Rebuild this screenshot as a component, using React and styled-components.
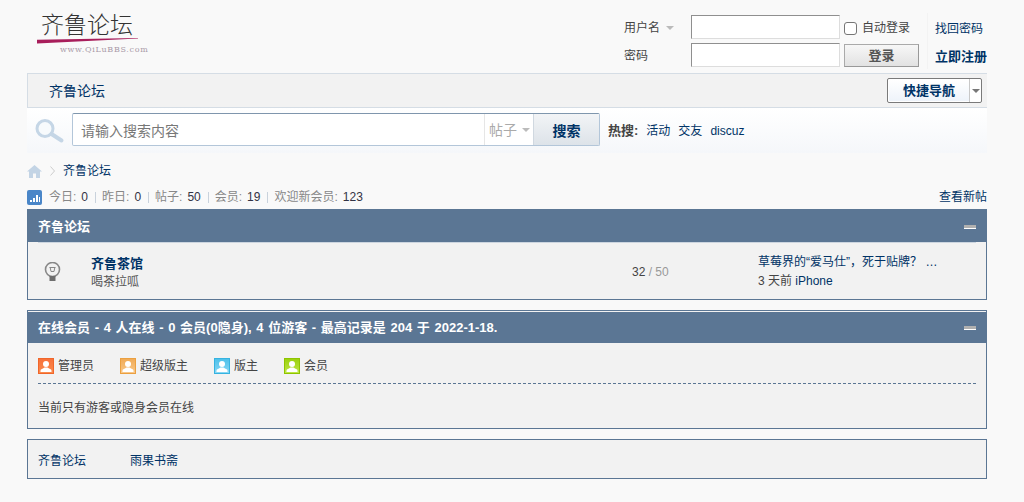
import React from 'react';
import styled, { createGlobalStyle } from 'styled-components';

const cjk = '"Liberation Sans", "Noto Sans CJK SC", sans-serif';
const link = '#003366';
const line = '#5b7694';

const Global = createGlobalStyle`
  html, body { margin: 0; padding: 0; background: #f9f9f9; }
  body { font: 12px/18px ${cjk}; color: #444; }
  a { color: ${link}; text-decoration: none; }
`;

const Page = styled.div`
  width: 960px;
  margin: 0 auto 0 27px;
  height: 502px;
  overflow: hidden;
`;

const Header = styled.header`
  height: 73px;
  display: flex;
  justify-content: space-between;
`;

const Logo = styled.div`
  width: 130px;
  margin-left: 10px;
  padding-top: 9px;
  display: flex;
  flex-direction: column;
`;

const LogoName = styled.div`
  margin-left: 4px;
  font: 300 23px/28px "Noto Sans CJK SC", sans-serif;
  color: #333;
`;

const Swoosh = styled.svg`
  display: block;
  width: 102px;
  height: 6px;
  margin-top: 1px;
`;

const LogoUrl = styled.div`
  margin-left: 23px;
  margin-top: 1px;
  font: 8px/10px "DejaVu Serif", serif;
  letter-spacing: 0.7px;
  color: #a99aa8;
  white-space: nowrap;
`;

const LoginForm = styled.form`
  display: grid;
  grid-template-columns: 67px 153px 83px 60px;
  grid-auto-rows: 28px;
  width: 363px;
  margin-top: 13px;
  align-items: center;
  color: #444;
`;

const FormLabel = styled.label`
  display: flex;
  align-items: center;
  gap: 6px;
  padding-top: 2px;
  color: #444;
`;

const Caret = styled.i`
  display: inline-block;
  width: 0;
  height: 0;
  border: 4px solid transparent;
  border-top: 4px solid ${p => p.$color || '#bbb'};
  border-bottom: 0;
`;

const FormInput = styled.input`
  box-sizing: border-box;
  width: 149px;
  height: 24px;
  padding: 0 4px;
  background: #fff;
  border: 1px solid #ddd;
  border-top-color: #8f8f8f;
  border-left-color: #8f8f8f;
  outline: 0;
`;

const AutoLogin = styled.label`
  display: flex;
  align-items: center;
  gap: 5px;
  padding-top: 2px;
`;

const Box = styled.input`
  appearance: none;
  box-sizing: border-box;
  width: 13px;
  height: 13px;
  margin: 0;
  background: #fff;
  border: 1px solid #767676;
  border-radius: 3px;
`;

const LoginButton = styled.button`
  box-sizing: border-box;
  width: 75px;
  height: 23px;
  padding: 0 0 1px;
  font: bold 13px ${cjk};
  color: #555;
  background: linear-gradient(#f7f7f7, #e2e2e2);
  border: 1px solid #999;
  border-color: #aaa #999 #999 #aaa;
`;

const SideLink = styled.a`
  box-sizing: border-box;
  height: 28px;
  padding: 7px 0 0 7px;
  border-left: 1px solid #f3f3f3;
  font: ${p => (p.$strong ? 'bold 13px/18px' : '12px/18px')} ${cjk};
  white-space: nowrap;
`;

const NavBar = styled.nav`
  box-sizing: border-box;
  height: 35px;
  padding: 0 5px 0 21px;
  display: flex;
  align-items: center;
  justify-content: space-between;
  background: #f2f2f2;
  border: 1px solid #d5dde5;
  border-width: 1px 0 1px 1px;
  font-size: 14px;
`;

const QuickNav = styled.div`
  box-sizing: border-box;
  width: 95px;
  height: 25px;
  display: flex;
  background: #fff;
  border: 1px solid #7a7a7a;
  border-radius: 2px;
`;

const QuickLabel = styled.a`
  flex: 1;
  margin: 1px 0 1px 1px;
  font: bold 13px/22px ${cjk};
  text-align: center;
  background: linear-gradient(#fff, #eef3fa);
  color: ${link};
`;

const QuickArrow = styled.span`
  width: 11px;
  display: flex;
  align-items: center;
  justify-content: center;
  border-left: 1px solid #c8c8c8;
`;

const SearchBar = styled.div`
  box-sizing: border-box;
  height: 45px;
  display: flex;
  align-items: center;
  padding: 0 0 3px 8px;
  background: linear-gradient(#fff, #f5f7fa);
`;

const SearchIcon = styled.svg`
  width: 30px;
  height: 26px;
  margin: 3px 7px 0 0;
  flex: none;
`;

const SearchBox = styled.div`
  box-sizing: border-box;
  width: 528px;
  height: 33px;
  display: flex;
  background: #fff;
  border: 1px solid #b3c6d9;
  border-top-color: #7f96ad;
  border-radius: 2px;
`;

const SearchInput = styled.div`
  flex: 1;
  padding: 2px 0 0 8px;
  font-size: 14px;
  line-height: 31px;
  color: #777;
`;

const SearchType = styled.div`
  box-sizing: border-box;
  width: 49px;
  display: flex;
  align-items: center;
  gap: 5px;
  padding: 1px 0 0 4px;
  border-left: 1px solid #e6e6e6;
  color: #aaa;
  font-size: 14px;
`;

const SearchButton = styled.button`
  width: 66px;
  padding: 2px 0 0;
  border: 0;
  border-left: 1px solid #d0d8e0;
  font: bold 14px ${cjk};
  color: ${link};
  background: linear-gradient(#f2f4f6, #dde3e9);
`;

const HotWords = styled.div`
  display: flex;
  align-items: center;
  margin-left: 8px;
  padding-top: 3px;
  gap: 8px;
`;

const HotLabel = styled.strong`
  font-size: 13px;
  color: #444;
`;

const Crumbs = styled.div`
  height: 35px;
  display: flex;
  align-items: center;
  padding-top: 1px;
  box-sizing: border-box;
`;

const HomeIcon = styled.svg`
  width: 15px;
  height: 13px;
`;

const CrumbSep = styled.svg`
  width: 5px;
  height: 10px;
  margin: 0 8px 0 8px;
`;

const Stats = styled.div`
  height: 18px;
  display: flex;
  align-items: center;
  justify-content: space-between;
  margin-bottom: 3px;
`;

const StatList = styled.div`
  display: flex;
  align-items: center;
  color: #888;
`;

const StatIcon = styled.svg`
  width: 15px;
  height: 15px;
  margin-right: 7px;
`;

const StatValue = styled.em`
  margin-left: 5px;
  font-style: normal;
  color: #334;
`;

const StatSep = styled.span`
  width: 1px;
  height: 11px;
  margin: 0 6px 0 7px;
  background: #c9d2dc;
`;

const Panel = styled.section`
  box-sizing: border-box;
  margin-bottom: 10px;
  background: #f2f2f2;
  border: 1px solid ${line};
`;

const PanelHead = styled.div`
  box-sizing: border-box;
  margin: ${p => (p.$inset ? '0' : '-1px -1px 0')};
  height: ${p => (p.$inset ? '32px' : '33px')};
  padding: ${p => (p.$inset ? '1px 10px 0' : '2px 11px 0')};
  display: flex;
  align-items: center;
  justify-content: space-between;
  font-size: 13px;
  font-weight: bold;
  word-spacing: ${p => (p.$inset ? '1.05px' : '0')};
  color: #fff;
  background: ${line};
  border-top: ${p => (p.$inset ? '1px solid #f2f2f2' : '0')};
`;

const Collapse = styled.span`
  width: 12px;
  height: 4px;
  background: #b0b0b0;
  border-bottom: 1px solid #fff;
  box-sizing: border-box;
`;

const ForumRow = styled.div`
  box-sizing: border-box;
  height: 57px;
  margin: 0 10px;
  padding-top: 1px;
  display: grid;
  grid-template-columns: 53px 541px 126px 1fr;
  align-items: center;
  border-top: 1px solid #cdd6e0;
`;

const BulbCell = styled.div`
  display: flex;
  justify-content: flex-start;
  padding-left: 6px;
`;

const ForumInfo = styled.div`
  padding-top: 3px;
`;

const ForumName = styled.a`
  display: block;
  font-size: 13px;
  font-weight: bold;
  line-height: 18px;
`;

const ForumDesc = styled.div`
  line-height: 18px;
  color: #555;
`;

const Count = styled.div`
  color: #444;
`;

const CountMuted = styled.span`
  color: #999;
`;

const LastPost = styled.div`
  padding-top: 1px;
  line-height: 19px;
  white-space: nowrap;
`;

const Legend = styled.div`
  box-sizing: border-box;
  display: flex;
  align-items: center;
  height: 41px;
  padding-top: 5px;
  margin: 0 10px;
  border-bottom: 1px dashed ${line};
`;

const LegendItem = styled.div`
  display: flex;
  align-items: center;
  gap: 4px;
  margin-right: 26px;
`;

const Online = styled.div`
  box-sizing: border-box;
  height: 44px;
  padding: 4px 10px 0;
  display: flex;
  align-items: center;
`;

const FooterLinks = styled.div`
  box-sizing: border-box;
  height: 38px;
  padding: 3px 10px 0;
  display: flex;
  align-items: center;
  gap: 44px;
`;

function UserBadge({ id, color, light, mid }) {
  return (
    <svg width="16" height="16" viewBox="0 0 16 16">
      <defs>
        <linearGradient id={id} x1="0" y1="0" x2="0" y2="1">
          <stop offset="0" stopColor={mid} />
          <stop offset="1" stopColor={light} />
        </linearGradient>
      </defs>
      <rect x="0.5" y="0.5" width="15" height="15" fill={`url(#${id})`} stroke={color} />
      <circle cx="8" cy="6" r="3" fill="#fff" />
      <path d="M2.5 14v-1.5c0-1.3 2.6-2 4-3h3c1.4 1 4 1.7 4 3V14z" fill="#fff" />
    </svg>
  );
}

const roles = [
  ['管理员', '#f0662a', '#fb8b4d', '#f7703a'],
  ['超级版主', '#eba040', '#f9c98c', '#f0aa55'],
  ['版主', '#36b3e0', '#8ad8f5', '#4cc0ea'],
  ['会员', '#8fc400', '#c0e84a', '#9ad00c'],
];

const stats = [
  ['今日:', '0'],
  ['昨日:', '0'],
  ['帖子:', '50'],
  ['会员:', '19'],
  ['欢迎新会员:', '123'],
];

export default function App() {
  return (
    <Page>
      <Global />
      <Header>
        <Logo>
          <LogoName>齐鲁论坛</LogoName>
          <Swoosh viewBox="0 0 102 6">
            <path d="M0 1.8L101 0V.6L0 5.5z" fill="#a81e5b" />
          </Swoosh>
          <LogoUrl>www.QiLuBBS.com</LogoUrl>
        </Logo>
        <LoginForm>
          <FormLabel>用户名 <Caret /></FormLabel>
          <FormInput />
          <AutoLogin><Box type="checkbox" />自动登录</AutoLogin>
          <SideLink>找回密码</SideLink>
          <FormLabel>密码</FormLabel>
          <FormInput />
          <LoginButton type="button">登录</LoginButton>
          <SideLink $strong>立即注册</SideLink>
        </LoginForm>
      </Header>
      <NavBar>
        <a>齐鲁论坛</a>
        <QuickNav>
          <QuickLabel>快捷导航</QuickLabel>
          <QuickArrow><Caret $color="#777" /></QuickArrow>
        </QuickNav>
      </NavBar>
      <SearchBar>
        <SearchIcon viewBox="0 0 30 26">
          <circle cx="10" cy="10.5" r="8" fill="#f7fafc" stroke="#c5d6e6" strokeWidth="3" />
          <path d="M16.5 16l10 6.5" stroke="#c5d6e6" strokeWidth="4" strokeLinecap="round" />
        </SearchIcon>
        <SearchBox>
          <SearchInput>请输入搜索内容</SearchInput>
          <SearchType>帖子 <Caret /></SearchType>
          <SearchButton type="button">搜索</SearchButton>
        </SearchBox>
        <HotWords>
          <HotLabel>热搜:</HotLabel>
          <a>活动</a>
          <a>交友</a>
          <a>discuz</a>
        </HotWords>
      </SearchBar>
      <Crumbs>
        <HomeIcon viewBox="0 0 15 13">
          <path d="M7.5 0L15 6.5h-2V13H9V8.5H6V13H2V6.5H0z" fill="#c3d4e5" />
        </HomeIcon>
        <CrumbSep viewBox="0 0 5 10">
          <path d="M.5.5L4.5 5 .5 9.5" fill="none" stroke="#ccc" />
        </CrumbSep>
        <a>齐鲁论坛</a>
      </Crumbs>
      <Stats>
        <StatList>
          <StatIcon viewBox="0 0 15 15">
            <rect width="15" height="15" rx="2" fill="#4a86c8" />
            <path d="M3 10h2v2H3zM6 8h2v4H6zM9 5h2v7H9zM12 7h1v5h-1z" fill="#fff" />
          </StatIcon>
          {stats.map(([label, value], i) => (
            <React.Fragment key={label}>
              {i > 0 && <StatSep />}
              {label}<StatValue>{value}</StatValue>
            </React.Fragment>
          ))}
        </StatList>
        <a>查看新帖</a>
      </Stats>
      <Panel>
        <PanelHead>齐鲁论坛<Collapse /></PanelHead>
        <ForumRow>
          <BulbCell>
            <svg width="17" height="20" viewBox="0 0 17 20">
              <circle cx="8.5" cy="7.5" r="7" fill="none" stroke="#888" strokeWidth="1.6" />
              <path d="M5.5 5.5h6M6.2 5.5l.8 4h3l.8-4" fill="none" stroke="#888" />
              <rect x="5.5" y="14" width="6" height="5" fill="#6e6e6e" />
            </svg>
          </BulbCell>
          <ForumInfo>
            <ForumName>齐鲁茶馆</ForumName>
            <ForumDesc>喝茶拉呱</ForumDesc>
          </ForumInfo>
          <Count>32 <CountMuted>/ 50</CountMuted></Count>
          <LastPost>
            <a>草莓界的“爱马仕”{'\uFF0C'}死于贴牌{'\uFF1F'} …</a>
            <div>3 天前 <a>iPhone</a></div>
          </LastPost>
        </ForumRow>
      </Panel>
      <Panel>
        <PanelHead $inset>在线会员 - 4 人在线 - 0 会员(0隐身), 4 位游客 - 最高记录是 204 于 2022-1-18.<Collapse /></PanelHead>
        <Legend>
          {roles.map(([name, color, light, mid]) => (
            <LegendItem key={name}>
              <UserBadge id={`badge-${color.slice(1)}`} color={color} light={light} mid={mid} />
              {name}
            </LegendItem>
          ))}
        </Legend>
        <Online>当前只有游客或隐身会员在线</Online>
      </Panel>
      <Panel>
        <FooterLinks>
          <a>齐鲁论坛</a>
          <a>雨果书斋</a>
        </FooterLinks>
      </Panel>
    </Page>
  );
}
